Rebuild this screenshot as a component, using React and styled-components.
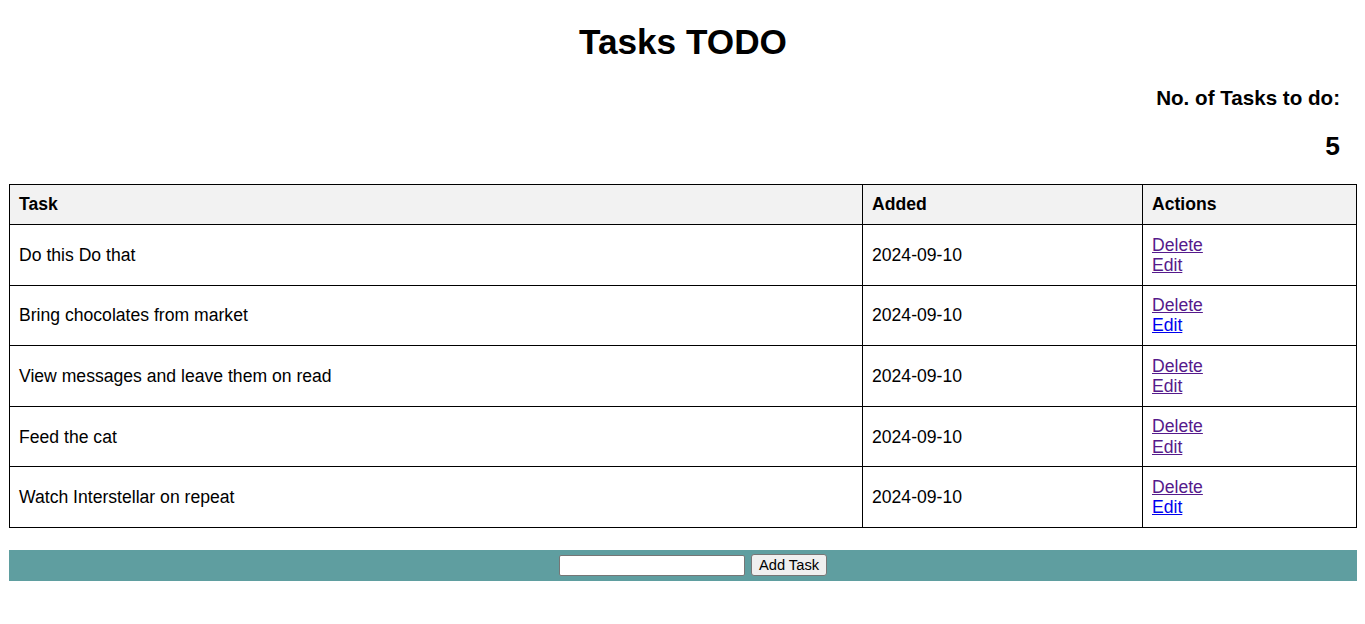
import React from 'react';
import styled, { createGlobalStyle } from 'styled-components';

const GlobalStyle = createGlobalStyle`
  body {
    margin: 0;
    font-family: "Liberation Sans", Arial, sans-serif;
    font-size: 17.6px;
    color: #000;
    background: #fff;
  }
`;

const Page = styled.div`
  padding: 0 8px 40px 9px;
`;

const Title = styled.h1`
  font-size: 35.2px;
  font-weight: 700;
  text-align: center;
  margin: 0;
  padding-top: 22px;
  margin-bottom: 23.6px;
  line-height: 40px;
`;

const Counter = styled.div`
  text-align: right;
  padding-right: 17px;
`;

const CounterLabel = styled.h3`
  font-size: 20.6px;
  margin: 0 0 21.9px;
  line-height: 23.7px;
`;

const CounterValue = styled.h2`
  font-size: 26.4px;
  margin: 0 0 22.5px;
  line-height: 30.4px;
`;

const Table = styled.table`
  width: 100%;
  border-collapse: collapse;
  table-layout: fixed;
`;

const HeadCell = styled.th`
  border: 1px solid #000;
  background: #f2f2f2;
  text-align: left;
  font-weight: 700;
  padding: 9.4px 9px;
  line-height: 20.2px;
`;

const Cell = styled.td`
  border: 1px solid #000;
  padding: 9.6px 9px;
  line-height: 20.2px;
  vertical-align: middle;
`;

const ActionLink = styled.a`
  display: block;
  width: fit-content;
  color: ${(p) => (p.$visited ? '#551a8b' : '#0000ee')};
  text-decoration: underline;
  line-height: 20.2px;
`;

const AddBar = styled.form`
  margin-top: 22px;
  background: #5f9ea0;
  height: 30.7px;
  padding-left: 20px;
  display: flex;
  align-items: center;
  justify-content: center;
  gap: 6px;
`;

const TaskInput = styled.input`
  width: 186px;
  height: 21px;
  box-sizing: border-box;
  border: 1px solid #767676;
  border-radius: 2px;
  background: #fff;
  padding: 1px 2px;
  font-size: 14.7px;
`;

const AddButton = styled.button`
  height: 22px;
  box-sizing: border-box;
  padding: 0 7px;
  border: 1px solid #767676;
  border-radius: 3px;
  background: #efefef;
  font-family: "Liberation Sans", Arial, sans-serif;
  font-size: 14.7px;
  color: #000;
`;

const tasks = [
  { text: 'Do this Do that', added: '2024-09-10', editVisited: true },
  { text: 'Bring chocolates from market', added: '2024-09-10', editVisited: false },
  { text: 'View messages and leave them on read', added: '2024-09-10', editVisited: true },
  { text: 'Feed the cat', added: '2024-09-10', editVisited: true },
  { text: 'Watch Interstellar on repeat', added: '2024-09-10', editVisited: false },
];

export default function App() {
  return (
    <Page>
      <GlobalStyle />
      <Title>Tasks TODO</Title>
      <Counter>
        <CounterLabel>No. of Tasks to do:</CounterLabel>
        <CounterValue>{tasks.length}</CounterValue>
      </Counter>
      <Table>
        <colgroup>
          <col />
          <col style={{ width: 280 }} />
          <col style={{ width: 214 }} />
        </colgroup>
        <thead>
          <tr>
            <HeadCell>Task</HeadCell>
            <HeadCell>Added</HeadCell>
            <HeadCell>Actions</HeadCell>
          </tr>
        </thead>
        <tbody>
          {tasks.map((t) => (
            <tr key={t.text}>
              <Cell>{t.text}</Cell>
              <Cell>{t.added}</Cell>
              <Cell>
                <ActionLink href="#" $visited>Delete</ActionLink>
                <ActionLink href="#" $visited={t.editVisited}>Edit</ActionLink>
              </Cell>
            </tr>
          ))}
        </tbody>
      </Table>
      <AddBar onSubmit={(e) => e.preventDefault()}>
        <TaskInput type="text" />
        <AddButton type="submit">Add Task</AddButton>
      </AddBar>
    </Page>
  );
}
